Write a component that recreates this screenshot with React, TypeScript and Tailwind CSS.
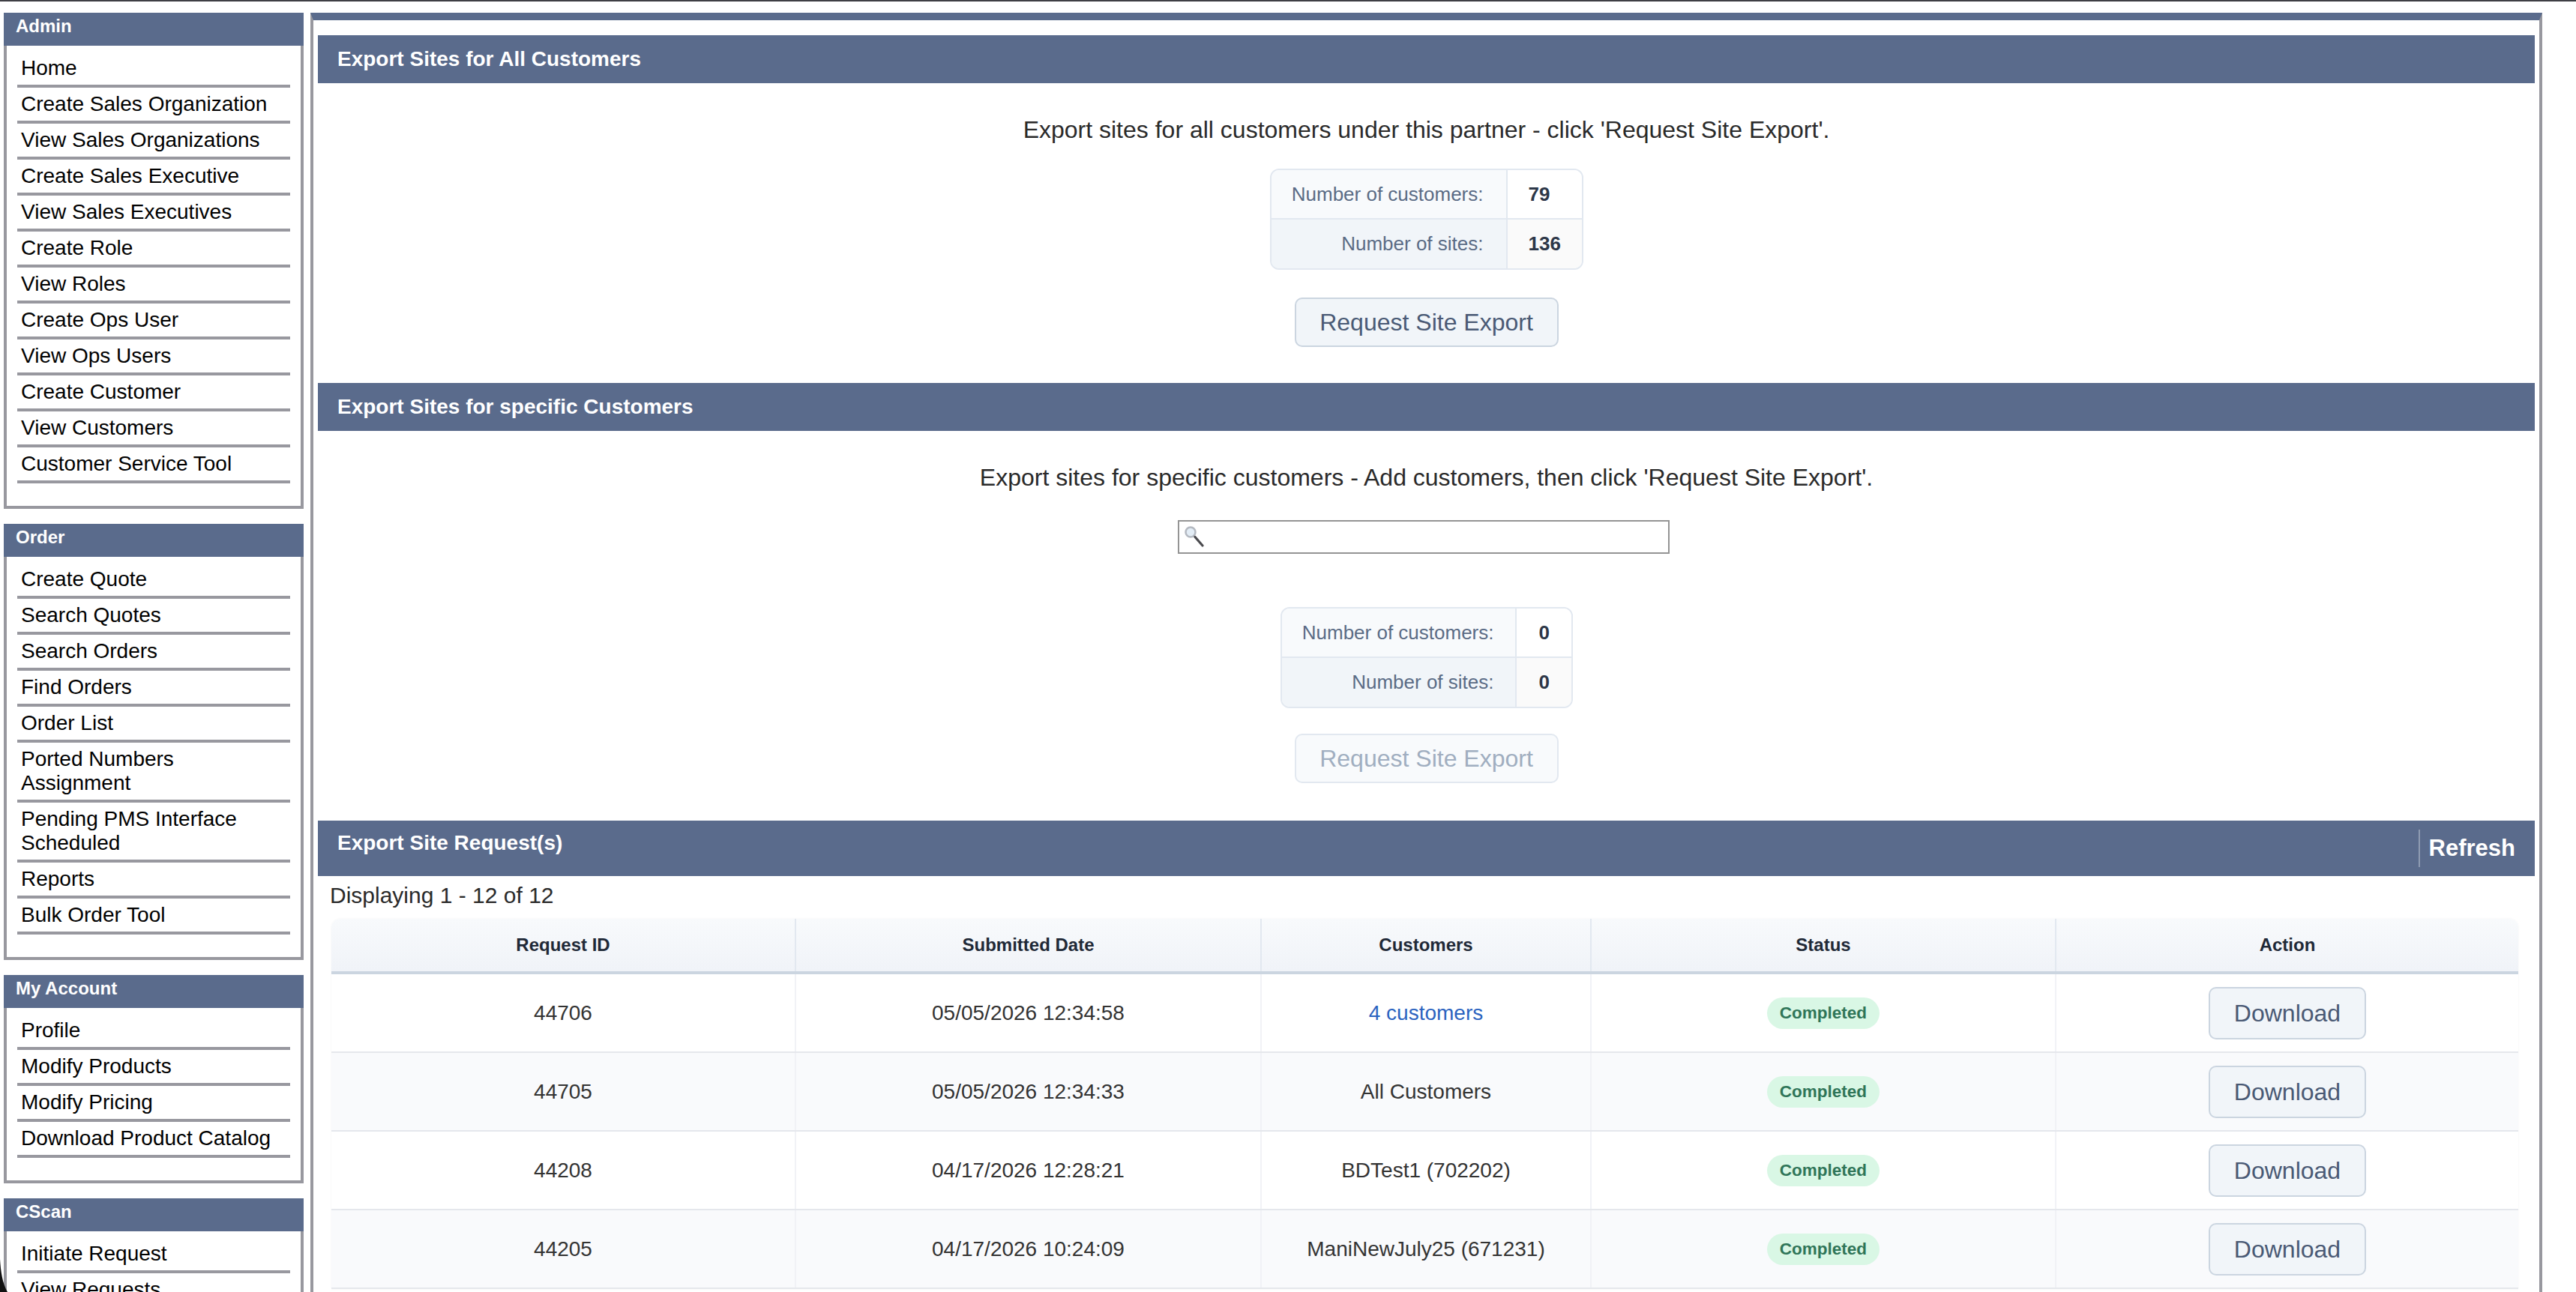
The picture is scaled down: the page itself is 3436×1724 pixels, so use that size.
const adminLinks = [
  "Home",
  "Create Sales Organization",
  "View Sales Organizations",
  "Create Sales Executive",
  "View Sales Executives",
  "Create Role",
  "View Roles",
  "Create Ops User",
  "View Ops Users",
  "Create Customer",
  "View Customers",
  "Customer Service Tool",
];

const orderLinks = [
  "Create Quote",
  "Search Quotes",
  "Search Orders",
  "Find Orders",
  "Order List",
  "Ported Numbers Assignment",
  "Pending PMS Interface Scheduled",
  "Reports",
  "Bulk Order Tool",
];

const accountLinks = ["Profile", "Modify Products", "Modify Pricing", "Download Product Catalog"];

const cscanLinks = ["Initiate Request", "View Requests"];

const requests = [
  { id: "44706", date: "05/05/2026 12:34:58", customers: "4 customers", link: true },
  { id: "44705", date: "05/05/2026 12:34:33", customers: "All Customers", link: false },
  { id: "44208", date: "04/17/2026 12:28:21", customers: "BDTest1 (702202)", link: false },
  { id: "44205", date: "04/17/2026 10:24:09", customers: "ManiNewJuly25 (671231)", link: false },
];

function NavPanel({ title, links }: { title: string; links: string[] }) {
  return (
    <div className="w-[400px] shrink-0">
      <div className="h-[44px] bg-[#5a6b8c] pl-[16px] pt-[4px] text-[24px] leading-[28px] font-bold text-white">
        {title}
      </div>
      <div className="border-x-[4px] border-b-[4px] border-[#98989f] bg-white px-[14px] pt-[8px] pb-[30px]">
        <ul>
          {links.map((link) => (
            <li
              key={link}
              className="border-b-[4px] border-[#98989f] py-[6px] pl-[5px] pr-[10px] text-[28px] leading-[32px] text-black"
            >
              {link}
            </li>
          ))}
        </ul>
      </div>
    </div>
  );
}

function SectionHeader({ title }: { title: string }) {
  return (
    <div className="flex h-[64px] items-center bg-[#5a6b8c] pl-[26px] text-[28px] font-bold text-white">
      {title}
    </div>
  );
}

function StatsTable({
  customers,
  sites,
  labelClass,
  valueClass,
}: {
  customers: string;
  sites: string;
  labelClass: string;
  valueClass: string;
}) {
  return (
    <div className="mx-auto w-fit overflow-hidden rounded-[12px] border-[2px] border-[#e2e8f0] text-[26px]">
      <div className="flex h-[66px] items-center border-b-[2px] border-[#e2e8f0]">
        <div className={`flex h-full items-center justify-end border-r-[2px] border-[#e2e8f0] bg-[#f8fafc] text-[#5a6b85] ${labelClass}`}>
          Number of customers:
        </div>
        <div className={`flex h-full items-center bg-white font-bold text-[#2d3748] ${valueClass}`}>{customers}</div>
      </div>
      <div className="flex h-[65px] items-center">
        <div className={`flex h-full items-center justify-end border-r-[2px] border-[#e2e8f0] bg-[#f1f5f9] text-[#5a6b85] ${labelClass}`}>
          Number of sites:
        </div>
        <div className={`flex h-full items-center bg-[#fafafa] font-bold text-[#2d3748] ${valueClass}`}>{sites}</div>
      </div>
    </div>
  );
}

function ActionButton({ label, disabled, className }: { label: string; disabled?: boolean; className?: string }) {
  return (
    <button
      disabled={disabled}
      className={`rounded-[10px] border-[2px] text-[32px] ${
        disabled
          ? "border-[#e2e8f0] bg-[#f8fafc] text-[#a0aec0]"
          : "border-[#cbd5e0] bg-[#f1f5f9] text-[#4a5a75]"
      } ${className ?? ""}`}
    >
      {label}
    </button>
  );
}

function SearchGlass() {
  return (
    <svg className="absolute left-[9px] top-[7px]" width="26" height="30" viewBox="0 0 26 30" fill="none">
      <circle cx="8" cy="9" r="6.5" fill="#e3edf6" stroke="#b4b9c1" strokeWidth="2.5" />
      <path d="M14 15.5 L24 27" stroke="#4a4a4e" strokeWidth="3.2" strokeLinecap="round" />
    </svg>
  );
}

const gridCols = "grid grid-cols-[620px_621px_440px_620px_1fr]";

function RequestsTable() {
  return (
    <div className="ml-[18px] mr-[22px] mt-[11px] rounded-t-[12px] shadow-[0_0_3px_rgba(0,0,0,0.05)]">
      <div
        className={`${gridCols} h-[74px] rounded-t-[12px] border-b-[4px] border-[#cbd5e0] bg-gradient-to-b from-[#f8fafc] to-[#f0f3f8] text-[24px] font-bold text-[#1f2937]`}
      >
        {["Request ID", "Submitted Date", "Customers", "Status", "Action"].map((h, i) => (
          <div
            key={h}
            className={`flex items-center justify-center ${i < 4 ? "border-r-[2px] border-[#e2e8f0]" : ""}`}
          >
            {h}
          </div>
        ))}
      </div>
      {requests.map((r, i) => (
        <div
          key={r.id}
          className={`${gridCols} h-[105px] border-b-[2px] border-[#e5e7ec] text-[28px] text-[#333333] ${
            i % 2 === 0 ? "bg-white" : "bg-[#f9fafc]"
          }`}
        >
          <div className="flex items-center justify-center border-r-[2px] border-[#f1f2f6]">{r.id}</div>
          <div className="flex items-center justify-center border-r-[2px] border-[#f1f2f6]">{r.date}</div>
          <div className="flex items-center justify-center border-r-[2px] border-[#f1f2f6]">
            {r.link ? <a className="text-[#2b63c0]">{r.customers}</a> : r.customers}
          </div>
          <div className="flex items-center justify-center border-r-[2px] border-[#f1f2f6]">
            <span className="flex h-[42px] items-center rounded-full bg-[#d9f7e5] px-[17px] text-[22.5px] font-bold text-[#2f7558]">
              Completed
            </span>
          </div>
          <div className="flex items-center justify-center">
            <ActionButton label="Download" className="h-[70px] w-[210px]" />
          </div>
        </div>
      ))}
    </div>
  );
}

export default function App() {
  return (
    <div className="relative h-[1724px] w-[3436px] overflow-hidden bg-white font-['Liberation_Sans',Arial,sans-serif]">
      <div className="h-[2px] bg-[#3f3f44]" />
      <div className="flex items-start gap-[9px] pl-[5px] pt-[15px]">
        {/* Left: nav panels */}
        <div className="flex w-[400px] shrink-0 flex-col gap-[20px]">
          <NavPanel title="Admin" links={adminLinks} />
          <NavPanel title="Order" links={orderLinks} />
          <NavPanel title="My Account" links={accountLinks} />
          <NavPanel title="CScan" links={cscanLinks} />
        </div>

        {/* Right: main area */}
        <main className="h-[1720px] w-[2977px] shrink-0 border-x-[4px] border-t-[10px] border-x-[#98989f] border-t-[#5a6b8c] px-[6px] pt-[20px]">
          <SectionHeader title="Export Sites for All Customers" />
          <p className="mt-[42px] h-[40px] text-center text-[32px] leading-[40px] text-[#2a2a2a]">
            Export sites for all customers under this partner - click 'Request Site Export'.
          </p>
          <div className="mt-[32px]">
            <StatsTable customers="79" sites="136" labelClass="w-[315px] pr-[30px]" valueClass="w-[99px] pl-[28px]" />
          </div>
          <div className="mt-[37px] flex justify-center">
            <ActionButton label="Request Site Export" className="h-[66px] w-[352px]" />
          </div>

          <div className="mt-[48px]">
            <SectionHeader title="Export Sites for specific Customers" />
          </div>
          <p className="mt-[42px] h-[40px] text-center text-[32px] leading-[40px] text-[#2a2a2a]">
            Export sites for specific customers - Add customers, then click 'Request Site Export'.
          </p>
          <div className="mt-[37px] flex justify-center pr-[8px]">
            <div className="relative h-[45px] w-[656px]">
              <input className="h-full w-full border-[2px] border-[#949494] bg-white" />
              <SearchGlass />
            </div>
          </div>
          <div className="mt-[71px]">
            <StatsTable customers="0" sites="0" labelClass="w-[313px] pr-[28px]" valueClass="w-[73px] pl-[30px]" />
          </div>
          <div className="mt-[34px] flex justify-center">
            <ActionButton label="Request Site Export" disabled className="h-[66px] w-[352px]" />
          </div>

          <div className="mt-[50px] flex h-[74px] bg-[#5a6b8c] pl-[26px] text-white">
            <span className="pt-[12px] text-[28px] leading-[36px] font-bold">Export Site Request(s)</span>
            <div className="ml-auto mr-[26px] mt-[12px] flex h-[50px] items-center border-l-[2px] border-[#8f9bb2] pl-[12px] text-[31px] font-bold">
              Refresh
            </div>
          </div>
          <div className="mt-[6px] h-[40px] pl-[16px] text-[30px] leading-[40px] text-[#2a2a2a]">
            Displaying 1 - 12 of 12
          </div>
          <RequestsTable />
        </main>
      </div>

      {/* rounded window corner, bottom left */}
      <svg className="absolute bottom-0 left-0" width="12" height="44" viewBox="0 0 12 44">
        <path d="M0 0 C1 16 3 32 10 44 L0 44 Z" fill="#111111" />
      </svg>
    </div>
  );
}
